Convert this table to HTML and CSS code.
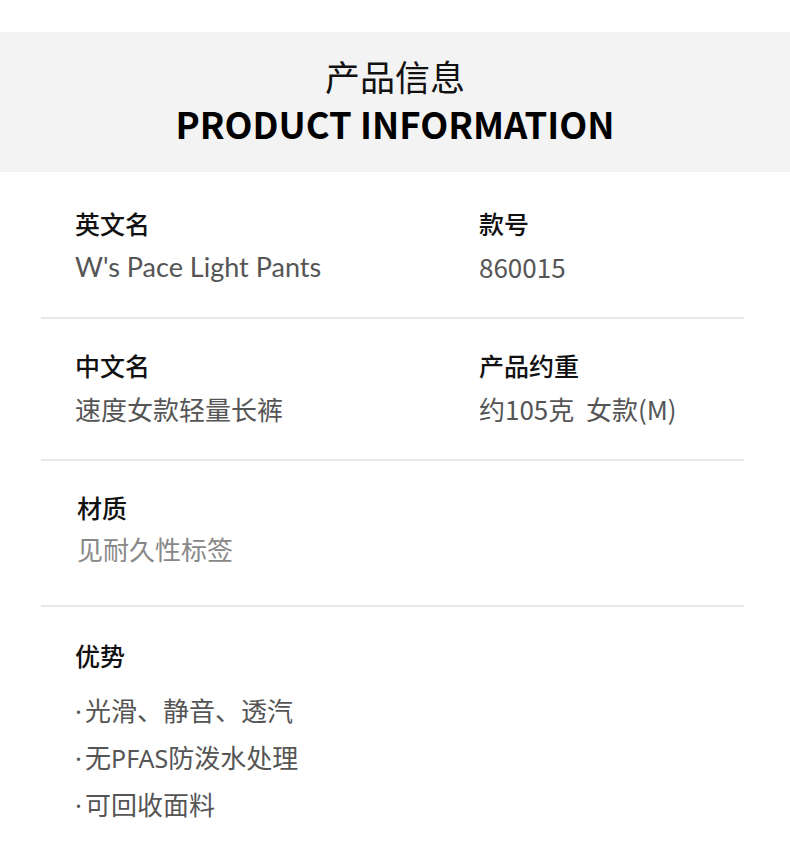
FILE: index.html
```html
<!DOCTYPE html>
<html lang="zh-CN">
<head>
<meta charset="utf-8">
<title>产品信息</title>
<link rel="stylesheet" href="styles.css">
</head>
<body>
<div class="page">
  <header class="banner">
    <h1 class="banner-cn">产品信息</h1>
    <h2 class="banner-en">PRODUCT INFORMATION</h2>
  </header>

  <section class="row row-first">
    <div class="cell">
      <div class="label">英文名</div>
      <div class="value value-latin">W's Pace Light Pants</div>
    </div>
    <div class="cell">
      <div class="label">款号</div>
      <div class="value">860015</div>
    </div>
  </section>

  <section class="row">
    <div class="cell">
      <div class="label">中文名</div>
      <div class="value">速度女款轻量长裤</div>
    </div>
    <div class="cell">
      <div class="label">产品约重</div>
      <div class="value">约105克&nbsp;&nbsp;女款(M)</div>
    </div>
  </section>

  <section class="row row-material">
    <div class="cell cell-shift">
      <div class="label">材质</div>
      <div class="value value-light">见耐久性标签</div>
    </div>
  </section>

  <section class="row row-last">
    <div class="cell">
      <div class="label">优势</div>
      <ul class="list">
        <li class="item">光滑、静音、透汽</li>
        <li class="item">无<span class="latin">PFAS</span>防泼水处理</li>
        <li class="item">可回收面料</li>
      </ul>
    </div>
  </section>
</div>
</body>
</html>
```

FILE: styles.css
```css
* { box-sizing: border-box; }

html, body {
  margin: 0;
  padding: 0;
  background: #fff;
}

body {
  font-family: "Noto Sans CJK SC", "Noto Sans", sans-serif;
  color: #111;
}

.page {
  width: 790px;
  padding-top: 32px;
}

.banner {
  background: #f3f3f3;
  height: 140px;
  display: flex;
  flex-direction: column;
  align-items: center;
  padding-top: 21px;
}

.banner-cn {
  margin: 0;
  font-size: 35px;
  font-weight: 400;
  line-height: 46px;
  color: #111;
}

.banner-en {
  margin: 0;
  font-size: 36.4px;
  font-weight: 700;
  line-height: 48px;
  color: #000;
}

.row {
  margin: 0 46px 0 41px;
  border-bottom: 2px solid #e8e8e8;
  display: grid;
  grid-template-columns: 404px 1fr;
  padding: 26px 0 30px 34px;
}

.row-first { padding-top: 31px; }
.row-material { padding-bottom: 36px; }
.row-last {
  border-bottom: none;
  padding-top: 28px;
}

.cell-shift { padding-left: 2px; }

.label {
  font-size: 25px;
  font-weight: 500;
  line-height: 40px;
  color: #111;
}

.value {
  margin-top: 4px;
  font-size: 26px;
  font-weight: 400;
  line-height: 40px;
  color: #555;
}

.value-latin {
  font-family: "Lato", "Noto Sans CJK SC", sans-serif;
  font-size: 27px;
}

.value-light {
  margin-top: 2px;
  color: #888;
}

.list {
  list-style: none;
  margin: 12px 0 0;
  padding: 0;
}

.item {
  font-size: 26px;
  line-height: 46px;
  color: #555;
  white-space: nowrap;
}

.item::before {
  content: "·";
  font-family: "Noto Sans", sans-serif;
  display: inline-block;
  width: 10px;
  text-align: left;
}

.latin {
  font-family: "Noto Sans", sans-serif;
  font-size: 25px;
}
```
